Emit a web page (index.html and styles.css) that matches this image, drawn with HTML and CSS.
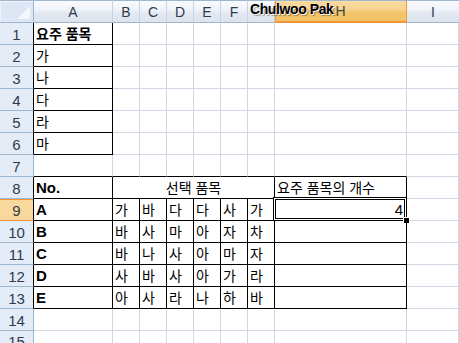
FILE: index.html
```html
<!DOCTYPE html>
<html lang="ko">
<head>
<meta charset="utf-8">
<title>Sheet</title>
<link rel="stylesheet" href="styles.css">
</head>
<body>
<div class="sheet">
  <!-- column headers -->
  <div class="corner"><span class="tri"></span></div>
  <div class="ch">A</div><div class="ch">B</div><div class="ch">C</div><div class="ch">D</div><div class="ch">E</div><div class="ch">F</div><div class="ch"></div><div class="ch sel-h">H</div><div class="ch last">I</div>

  <!-- row 1 -->
  <div class="rh bk">1</div><div class="c br bb b ko">요주 품목</div><div class="c"></div><div class="c"></div><div class="c"></div><div class="c"></div><div class="c"></div><div class="c"></div><div class="c"></div><div class="c"></div>
  <!-- row 2 -->
  <div class="rh bk">2</div><div class="c br bb ko">가</div><div class="c"></div><div class="c"></div><div class="c"></div><div class="c"></div><div class="c"></div><div class="c"></div><div class="c"></div><div class="c"></div>
  <!-- row 3 -->
  <div class="rh bk">3</div><div class="c br bb ko">나</div><div class="c"></div><div class="c"></div><div class="c"></div><div class="c"></div><div class="c"></div><div class="c"></div><div class="c"></div><div class="c"></div>
  <!-- row 4 -->
  <div class="rh bk">4</div><div class="c br bb ko">다</div><div class="c"></div><div class="c"></div><div class="c"></div><div class="c"></div><div class="c"></div><div class="c"></div><div class="c"></div><div class="c"></div>
  <!-- row 5 -->
  <div class="rh bk">5</div><div class="c br bb ko">라</div><div class="c"></div><div class="c"></div><div class="c"></div><div class="c"></div><div class="c"></div><div class="c"></div><div class="c"></div><div class="c"></div>
  <!-- row 6 -->
  <div class="rh bk">6</div><div class="c br bb ko">마</div><div class="c"></div><div class="c"></div><div class="c"></div><div class="c"></div><div class="c"></div><div class="c"></div><div class="c"></div><div class="c"></div>
  <!-- row 7 -->
  <div class="rh">7</div><div class="c bb"></div><div class="c bb"></div><div class="c bb"></div><div class="c bb"></div><div class="c bb"></div><div class="c bb"></div><div class="c bb"></div><div class="c bb"></div><div class="c"></div>
  <!-- row 8 -->
  <div class="rh bk">8</div><div class="c br bb b lat">No.</div><div class="c br bb ko span6 center">선택 품목</div><div class="c br bb ko">요주 품목의 개수</div><div class="c"></div>
  <!-- row 9 -->
  <div class="rh bk sel-r">9</div><div class="c br bb b lat">A</div><div class="c br bb ko">가</div><div class="c br bb ko">바</div><div class="c br bb ko">다</div><div class="c br bb ko">다</div><div class="c br bb ko">사</div><div class="c br bb ko">가</div><div class="c br bb num active">4<span class="selbox"></span><span class="handle"></span></div><div class="c"></div>
  <!-- row 10 -->
  <div class="rh bk">10</div><div class="c br bb b lat">B</div><div class="c br bb ko">바</div><div class="c br bb ko">사</div><div class="c br bb ko">마</div><div class="c br bb ko">아</div><div class="c br bb ko">자</div><div class="c br bb ko">차</div><div class="c br bb"></div><div class="c"></div>
  <!-- row 11 -->
  <div class="rh bk">11</div><div class="c br bb b lat">C</div><div class="c br bb ko">바</div><div class="c br bb ko">나</div><div class="c br bb ko">사</div><div class="c br bb ko">아</div><div class="c br bb ko">마</div><div class="c br bb ko">자</div><div class="c br bb"></div><div class="c"></div>
  <!-- row 12 -->
  <div class="rh bk">12</div><div class="c br bb b lat">D</div><div class="c br bb ko">사</div><div class="c br bb ko">바</div><div class="c br bb ko">사</div><div class="c br bb ko">아</div><div class="c br bb ko">가</div><div class="c br bb ko">라</div><div class="c br bb"></div><div class="c"></div>
  <!-- row 13 -->
  <div class="rh bk">13</div><div class="c br bb b lat">E</div><div class="c br bb ko">아</div><div class="c br bb ko">사</div><div class="c br bb ko">라</div><div class="c br bb ko">나</div><div class="c br bb ko">하</div><div class="c br bb ko">바</div><div class="c br bb"></div><div class="c"></div>
  <!-- row 14 -->
  <div class="rh">14</div><div class="c"></div><div class="c"></div><div class="c"></div><div class="c"></div><div class="c"></div><div class="c"></div><div class="c"></div><div class="c"></div><div class="c"></div>
  <!-- row 15 -->
  <div class="rh last-row">15</div><div class="c"></div><div class="c"></div><div class="c"></div><div class="c"></div><div class="c"></div><div class="c"></div><div class="c"></div><div class="c"></div><div class="c"></div>

  <div class="tip">Chulwoo Pak</div>
</div>
</body>
</html>
```
FILE: styles.css
```css
html, body {
  margin: 0;
  padding: 0;
  background: #fff;
}
.sheet {
  position: relative;
  width: 459px;
  height: 343px;
  overflow: hidden;
  display: grid;
  grid-template-columns: 34px 79px repeat(6, 27px) 132px 52px;
  grid-template-rows: 23px repeat(15, 22px);
  font-family: "Noto Sans CJK KR", "Liberation Sans", sans-serif;
  color: #000;
}
.corner {
  position: relative;
  box-sizing: border-box;
  background: #dce6f4;
  border-top: 1px solid #9eb6ce;
  border-right: 1px solid #9eb6ce;
  border-bottom: 1px solid #9eb6ce;
  box-shadow: inset 1px 1px 0 #eef3fa;
}
.tri {
  position: absolute;
  right: 3px;
  bottom: 3px;
  width: 0;
  height: 0;
  border-left: 13px solid transparent;
  border-bottom: 13px solid #f3f6fb;
}
.ch {
  box-sizing: border-box;
  display: flex;
  align-items: center;
  justify-content: center;
  font-family: "Liberation Sans", sans-serif;
  font-size: 14px;
  color: #2f3b4c;
  background: linear-gradient(#f9fafd 0%, #eef2f8 45%, #e3e9f2 55%, #dde4ee 100%);
  border-top: 1px solid #9eb6ce;
  border-right: 1px solid #c5d3e4;
  border-bottom: 1px solid #9eb6ce;
}
.ch.last {
  border-right: none;
}
.ch.sel-h {
  background: linear-gradient(#f9dba4 0%, #f7d28d 45%, #f4c46c 55%, #f3c467 100%);
  border-top: 1px solid #9eb6ce;
  border-right: 1px solid #f29536;
  border-bottom: 2px solid #f29536;
  box-shadow: inset 1px 0 0 #f29536;
  color: #3b4a3b;
}
.rh {
  box-sizing: border-box;
  display: flex;
  align-items: center;
  justify-content: center;
  font-family: "Liberation Sans", sans-serif;
  font-size: 15px;
  color: #2f3b4c;
  background: #e4ecf7;
  border-right: 1px solid #9eb6ce;
  border-bottom: 1px solid #9eb6ce;
  padding-top: 1px;
}
.rh.last-row {
  align-items: flex-start;
  padding-top: 2px;
}
.rh.bk {
  border-right-color: #000;
}
.rh.sel-r {
  background: #f9d89d;
  border-bottom-color: #f29536;
  box-shadow: inset 0 1px 0 #f29536;
}
.c {
  box-sizing: border-box;
  display: flex;
  align-items: flex-end;
  padding: 0 2px 1px 2px;
  white-space: nowrap;
  overflow: visible;
  border-right: 1px solid #d0d7e5;
  border-bottom: 1px solid #d0d7e5;
  font-size: 14px;
  line-height: 19px;
}
.c.br { border-right-color: #000; }
.c.bb { border-bottom-color: #000; }
.ko {
  font-family: "Noto Sans CJK KR", sans-serif;
  font-size: 14px;
}
.lat {
  font-family: "Liberation Sans", sans-serif;
  font-size: 15px;
}
.b { font-weight: bold; }
.span6 {
  grid-column: span 6;
}
.center {
  justify-content: center;
}
.num {
  justify-content: flex-end;
  font-family: "Liberation Sans", sans-serif;
  font-size: 15px;
  padding-right: 3px;
}
.active {
  position: relative;
}
.selbox {
  position: absolute;
  left: -2px;
  top: -2px;
  right: -1px;
  bottom: -1px;
  border: 1px solid #000;
  box-shadow: inset 0 0 0 1px #fff, inset 0 0 0 2px #000;
  pointer-events: none;
}
.handle {
  position: absolute;
  right: -3px;
  bottom: -3px;
  width: 5px;
  height: 5px;
  background: #000;
  border: 1px solid #fff;
  border-right: none;
  border-bottom: none;
}
.tip {
  position: absolute;
  left: 250px;
  top: 1px;
  font-family: "Liberation Sans", sans-serif;
  font-weight: bold;
  font-size: 14px;
  letter-spacing: -0.4px;
  color: #000;
  text-shadow: 1px 1px 0 #fff, 2px 2px 1px rgba(0, 0, 0, 0.35);
}
```
